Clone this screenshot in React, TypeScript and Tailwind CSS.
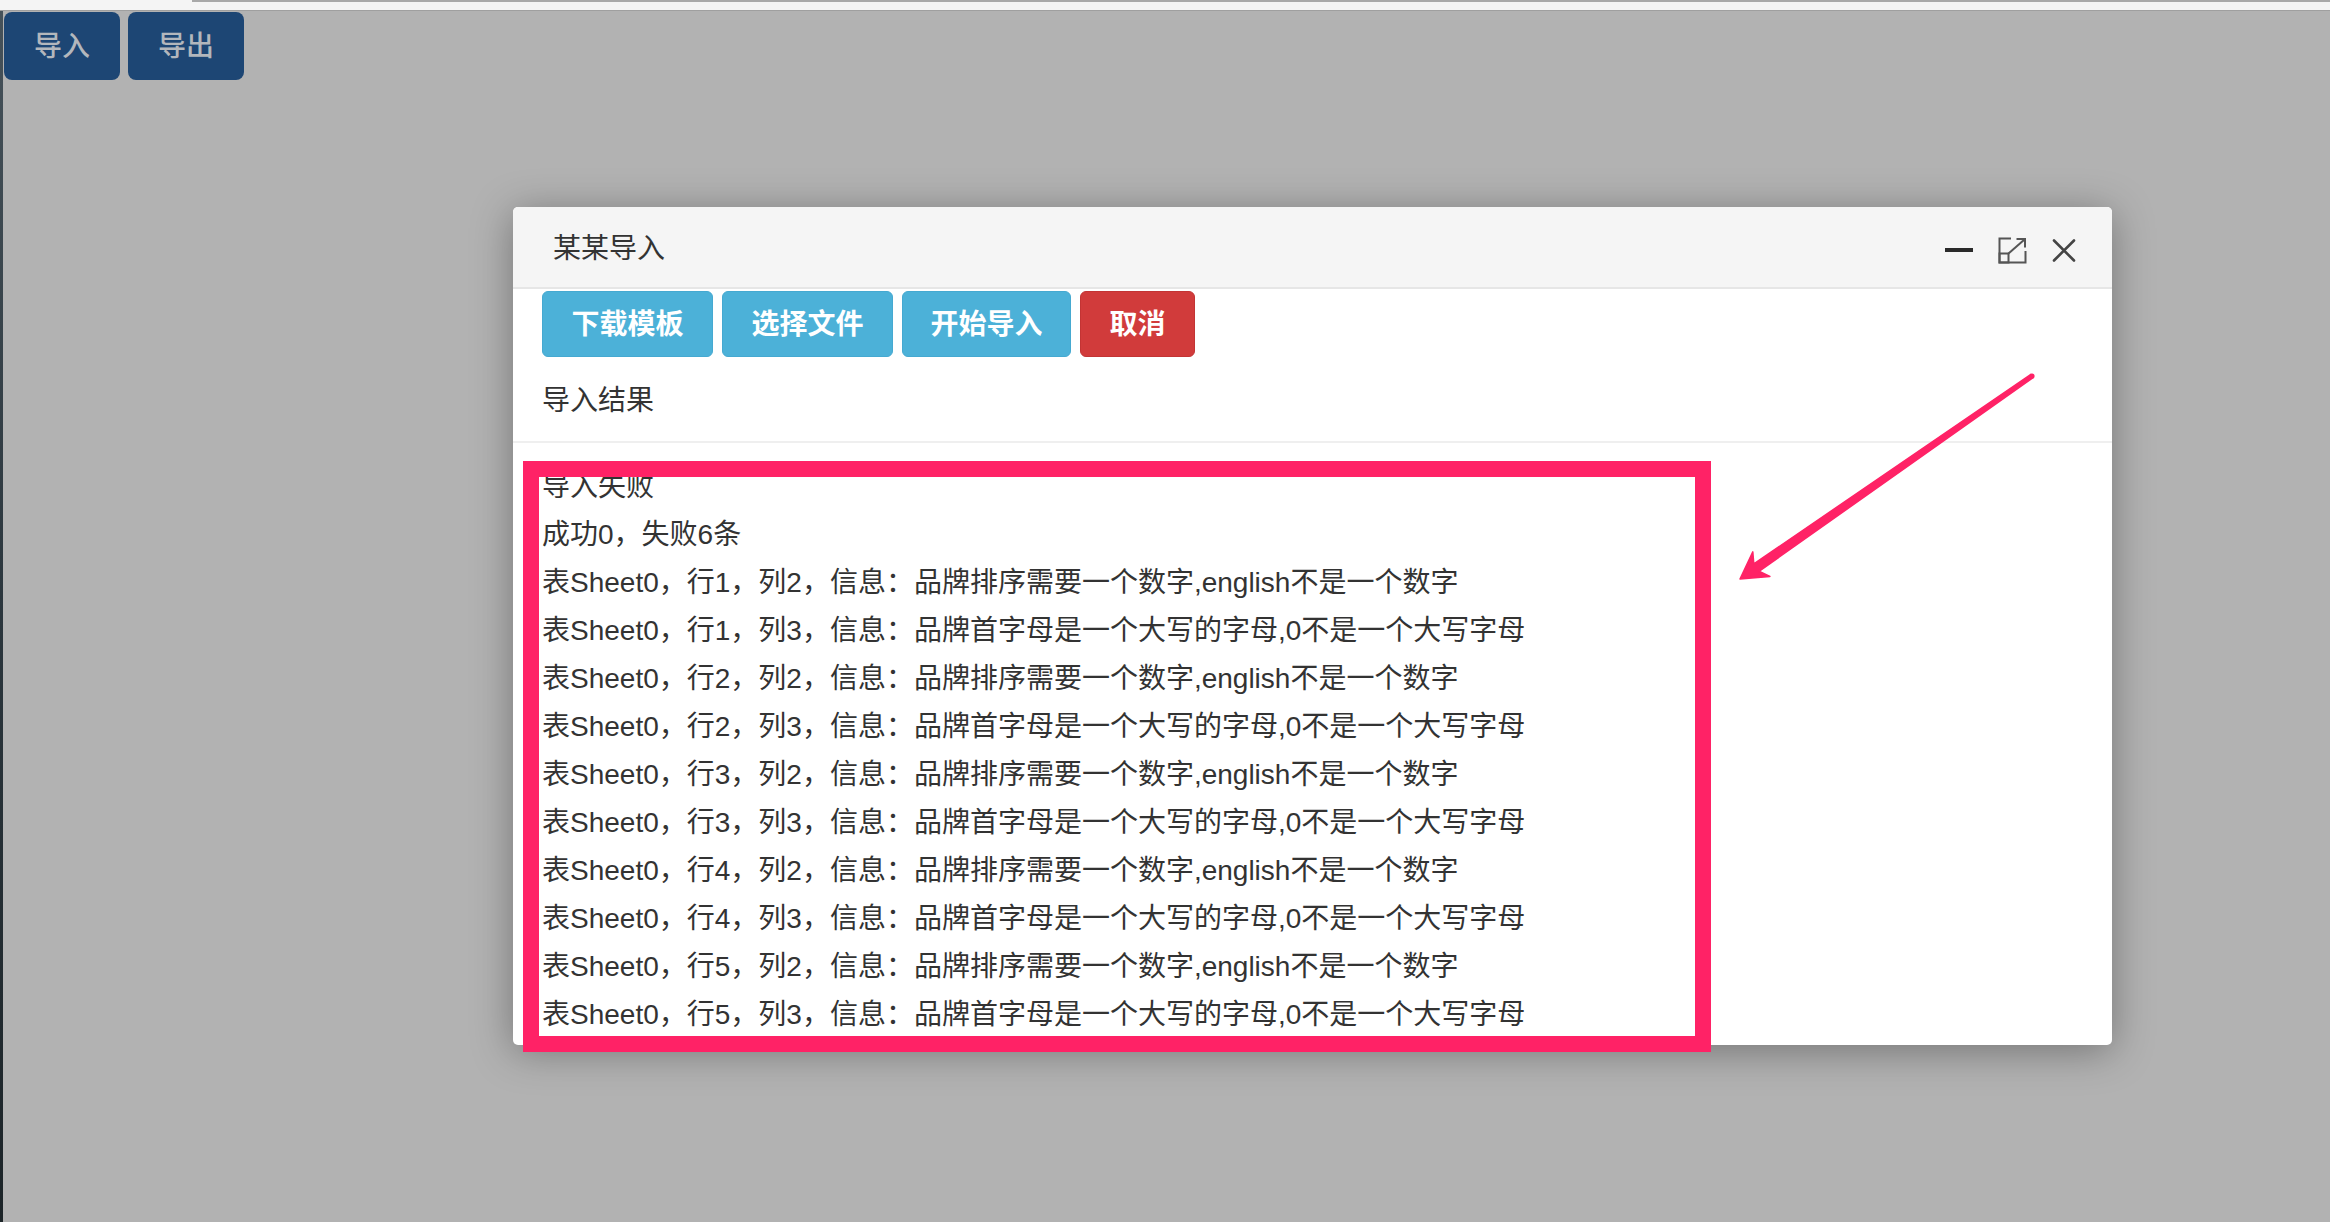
import React from 'react';

const FONT = '"Liberation Sans", "Noto Sans CJK SC", sans-serif';

const resultLines: string[] = ['导入失败', '成功0，失败6条'];
for (let r = 1; r <= 5; r++) {
  resultLines.push(`表Sheet0，行${r}，列2，信息：品牌排序需要一个数字,english不是一个数字`);
  resultLines.push(`表Sheet0，行${r}，列3，信息：品牌首字母是一个大写的字母,0不是一个大写字母`);
}

function MaximizeIcon() {
  return (
    <svg width="29" height="27" viewBox="0 0 29 27" fill="none" stroke="#555" strokeWidth="2">
      <path d="M13 1.5H1.5V25.5H27.5V14" />
      <rect x="1.5" y="16.5" width="9" height="9" />
      <path d="M10.5 16.5L26.5 2.5" />
      <path d="M18.5 2H27V10.5" />
    </svg>
  );
}

function CloseIcon() {
  return (
    <svg width="24" height="23" viewBox="0 0 24 23" fill="none" stroke="#444" strokeWidth="2.6" strokeLinecap="round">
      <path d="M2 1.5L22 21.5M22 1.5L2 21.5" />
    </svg>
  );
}

function ImportDialog() {
  return (
    <div className="absolute left-[513px] top-[207px] flex h-[838px] w-[1599px] flex-col overflow-hidden rounded-[5px] bg-white shadow-[0_6px_40px_rgba(0,0,0,0.35)]">
      {/* header */}
      <div className="flex h-[82px] shrink-0 items-center justify-between border-b-2 border-[#e6e6e6] bg-[#f5f5f5] pl-[40px] pr-[36px]">
        <span className="pt-[4px] text-[28px] leading-[40px] text-[#333]">某某导入</span>
        <div className="flex items-center gap-[25px] pt-[6px]">
          <div className="h-[4px] w-[28px] bg-[#2a2a2a]" />
          <MaximizeIcon />
          <CloseIcon />
        </div>
      </div>

      <div className="px-[29px]">
        <div className="mt-[2px] flex h-[66px] gap-[9px]">
          <button className="w-[171px] rounded-[6px] border border-[#45a9d1] bg-[#4cb1d8] pt-[2px] text-[28px] font-semibold text-white">下载模板</button>
          <button className="w-[171px] rounded-[6px] border border-[#45a9d1] bg-[#4cb1d8] pt-[2px] text-[28px] font-semibold text-white">选择文件</button>
          <button className="w-[169px] rounded-[6px] border border-[#45a9d1] bg-[#4cb1d8] pt-[2px] text-[28px] font-semibold text-white">开始导入</button>
          <button className="w-[115px] rounded-[6px] border border-[#c33434] bg-[#d13b3b] pt-[2px] text-[28px] font-semibold text-white">取消</button>
        </div>
        <div className="mt-[24px] text-[28px] leading-[40px] text-[#333]">导入结果</div>
      </div>

      <div className="mt-[20px] h-[2px] shrink-0 bg-[#efefef]" />

      <div className="px-[29px] pt-[20px]">
        {resultLines.map((line, i) => (
          <div key={i} className="whitespace-nowrap text-[28px] leading-[48px] text-[#333]">
            {line}
          </div>
        ))}
      </div>
    </div>
  );
}

function Annotation() {
  // pink highlight box and arrow drawn over the screenshot
  return (
    <svg className="pointer-events-none absolute left-0 top-0" width="2330" height="1222" viewBox="0 0 2330 1222">
      <rect x="531" y="469" width="1172" height="575" fill="none" stroke="#ff2266" strokeWidth="16" />
      <polygon
        points="2033.1,377.6 1759.0,571.3 1769.9,576.5 1740,579 1752.8,551.9 1753.8,563.9 2030.9,374.4"
        fill="#ff2266"
        stroke="#ff2266"
        strokeWidth="1.5"
        strokeLinejoin="round"
      />
      <circle cx="2032" cy="376" r="2.6" fill="#ff2266" />
    </svg>
  );
}

export default function App() {
  return (
    <div className="relative h-[1222px] w-[2330px] overflow-hidden bg-[#b2b2b2]" style={{ fontFamily: FONT }}>
      <div className="flex h-full flex-col">
        {/* browser strip */}
        <div className="h-[11px] shrink-0 border-b border-[#9f9f9f] bg-[#f4f4f4]">
          <div className="ml-[192px] h-[2px] bg-[#a8a8a8]" />
        </div>
        <div className="flex flex-1">
          <div className="w-[3px] bg-gradient-to-b from-[#46525a] via-[#2b363d] to-[#1c2428]" />
          <div className="flex gap-[8px] pl-[1px] pt-[1px]">
            <button className="h-[68px] w-[116px] rounded-[8px] bg-[#1d4674] pt-[2px] text-[28px] font-medium text-[#b3b7bc]">导入</button>
            <button className="h-[68px] w-[116px] rounded-[8px] bg-[#1d4674] pt-[2px] text-[28px] font-medium text-[#b3b7bc]">导出</button>
          </div>
        </div>
      </div>

      <ImportDialog />
      <Annotation />
    </div>
  );
}
